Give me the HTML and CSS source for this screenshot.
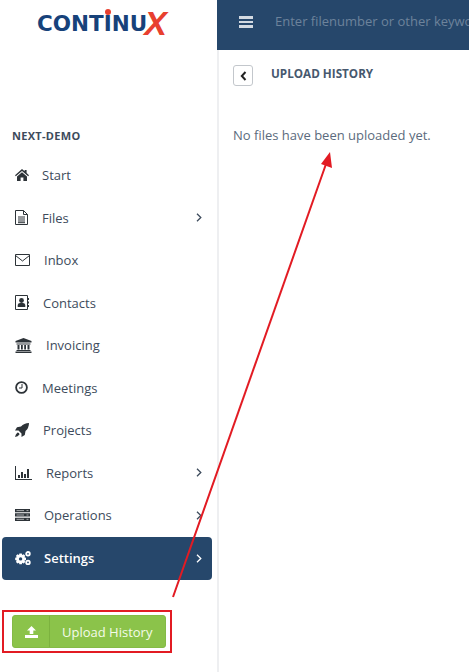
FILE: index.html
```html
<!DOCTYPE html>
<html lang="en">
<head>
    <meta charset="UTF-8">
    <meta name="viewport" content="width=device-width, initial-scale=1.0">
    <title>Upload History</title>
    <link rel="stylesheet" href="styles.css">
</head>
<body>
    <div class="app">
        <aside class="sidebar">
            <div class="logo"><span class="logo-word">CONT<span class="logo-i">I</span>NU</span><span class="logo-x">X</span></div>
            <div class="org">NEXT-DEMO</div>
            <nav class="menu">
                <a class="item">
                    <svg class="icon" width="13" height="12" viewBox="0 0 13 12"><path d="M7 0 L9.6 2.3 V1 H11.6 V4 L14 6.2 L13.2 7.2 L7 1.9 L.8 7.2 L0 6.2 Z M2 7.4 L7 3.2 L12 7.4 V12 H8.4 V8.4 H5.6 V12 H2 Z"/></svg>
                    <span>Start</span>
                </a>
                <a class="item">
                    <svg class="icon" width="13" height="15" viewBox="0 0 13 15"><path class="line" d="M.5.5 H8.5 L12.5 4.5 V14.5 H.5 Z M8.5.5 V4.5 H12.5"/><path class="line" d="M3 7 H10 M3 9 H10 M3 11 H10 M3 12.7 H10"/></svg>
                    <span>Files</span>
                    <svg class="chev" width="6" height="9" viewBox="0 0 6 9"><path d="M1 .8 L4.8 4.5 L1 8.2"/></svg>
                </a>
                <a class="item">
                    <svg class="icon" width="15" height="12" viewBox="0 0 15 12"><path class="line" d="M.5.5 H14.5 V11.5 H.5 Z M.5 1.5 L7.5 7 L14.5 1.5"/></svg>
                    <span>Inbox</span>
                </a>
                <a class="item">
                    <svg class="icon" width="14" height="15" viewBox="0 0 14 15"><path class="line" d="M.5.5 H12.5 V14.5 H.5 Z"/><circle cx="6.5" cy="5.5" r="2.4"/><path d="M2.7 12 V10 Q3 8 5 8 H8 Q10 8 10.3 10 V12 Z M13 3 H14 V5 H13 Z M13 6.5 H14 V8.5 H13 Z M13 10 H14 V12 H13 Z"/></svg>
                    <span>Contacts</span>
                </a>
                <a class="item">
                    <svg class="icon" width="17" height="15" viewBox="0 0 17 15"><path d="M8.5 0 L16.5 3 V4.5 H.5 V3 Z M1.5 5.5 H15.5 V6.5 H1.5 Z M2.5 7 H4.5 V11.5 H2.5 Z M6 7 H7.8 V11.5 H6 Z M9.2 7 H11 V11.5 H9.2 Z M12.5 7 H14.5 V11.5 H12.5 Z M1.5 12 H15.5 V13 H1.5 Z M.5 13.5 H16.5 V15 H.5 Z"/></svg>
                    <span>Invoicing</span>
                </a>
                <a class="item">
                    <svg class="icon" width="13" height="13" viewBox="0 0 13 13"><circle class="ring" cx="6.5" cy="6.5" r="5.4"/><path class="line" d="M7 3 V7 H4"/></svg>
                    <span>Meetings</span>
                </a>
                <a class="item">
                    <svg class="icon" width="14" height="14" viewBox="0 0 14 14"><path d="M14 0 Q14 5 10.5 8 L9.8 12 L6.5 14 L6.5 10.5 L3.5 7.5 L0 7.5 L2 4.2 L6 3.5 Q9 0 14 0 Z M2.5 9.5 Q4.5 9.5 4.5 11.5 Q3 13.5 0 14 Q.5 11 2.5 9.5 Z"/></svg>
                    <span>Projects</span>
                </a>
                <a class="item">
                    <svg class="icon" width="17" height="14" viewBox="0 0 17 14"><path d="M0 0 H1 V13 H17 V14 H0 Z M3 9 H5 V12 H3 Z M6 6 H8 V12 H6 Z M9 8 H11 V12 H9 Z M12 3 H14 V12 H12 Z"/></svg>
                    <span>Reports</span>
                    <svg class="chev" width="6" height="9" viewBox="0 0 6 9"><path d="M1 .8 L4.8 4.5 L1 8.2"/></svg>
                </a>
                <a class="item">
                    <svg class="icon" width="15" height="12" viewBox="0 0 15 12"><path d="M0 0 H15 V3.3 H0 Z M0 4.3 H15 V7.6 H0 Z M0 8.7 H15 V12 H0 Z"/><path class="slot" d="M1.5 1.6 H9 M1.5 6 H9 M1.5 10.3 H9 M11.5 1.6 H13.5 M11.5 6 H13.5 M11.5 10.3 H13.5"/></svg>
                    <span>Operations</span>
                    <svg class="chev" width="6" height="9" viewBox="0 0 6 9"><path d="M1 .8 L4.8 4.5 L1 8.2"/></svg>
                </a>
                <a class="item active">
                    <svg class="icon" width="15" height="14" viewBox="0 0 15 14"><path fill-rule="evenodd" d="M4.4 2.6 H6.8 L7.2 4 L8.7 3.3 L10.2 4.8 L9.5 6.3 L11 6.8 V9 L9.5 9.5 L10.2 11 L8.7 12.5 L7.2 11.8 L6.8 13.2 H4.4 L4 11.8 L2.5 12.5 L1 11 L1.7 9.5 L.2 9 V6.8 L1.7 6.3 L1 4.8 L2.5 3.3 L4 4 Z M5.6 6.2 A1.7 1.7 0 1 0 5.6 9.6 A1.7 1.7 0 1 0 5.6 6.2 Z"/><circle class="ring" cx="13" cy="2.8" r="1.8"/><circle class="ring" cx="13" cy="11.4" r="1.8"/></svg>
                    <span>Settings</span>
                    <svg class="chev" width="6" height="9" viewBox="0 0 6 9"><path d="M1 .8 L4.8 4.5 L1 8.2"/></svg>
                </a>
            </nav>
            <div class="upload-btn">
                <span class="upload-icon">
                    <svg width="13" height="12" viewBox="0 0 13 12"><path d="M6.5 0 L11 4.5 H8.3 V8 H4.7 V4.5 H2 Z M0 9 H13 V12 H0 Z"/></svg>
                </span>
                <span class="upload-label">Upload History</span>
            </div>
        </aside>
        <main class="main">
            <header class="topbar">
                <div class="burger"><i></i><i></i><i></i></div>
                <div class="search">Enter filenumber or other keywords</div>
            </header>
            <div class="content">
                <div class="title-row">
                    <div class="back">
                        <svg width="7" height="10" viewBox="0 0 7 10"><path d="M5.5 1 L1.8 5 L5.5 9"/></svg>
                    </div>
                    <h1>UPLOAD HISTORY</h1>
                </div>
                <p class="empty">No files have been uploaded yet.</p>
            </div>
        </main>
    </div>

    <!-- annotations drawn on top of the screenshot -->
    <div class="mark-box"></div>
    <svg class="mark-arrow" width="469" height="672" viewBox="0 0 469 672">
        <path d="M173 597 L326 164" />
        <polygon points="330,152 332,168 321,164" />
    </svg>
</body>
</html>
```
FILE: styles.css
```css
body {
    margin: 0;
    width: 469px;
    height: 672px;
    overflow: hidden;
    position: relative;
    background: #fff;
    font-family: "Open Sans", sans-serif;
    font-size: 13px;
    color: #3d4b5c;
}

.app {
    display: flex;
    height: 672px;
}

.sidebar {
    width: 217px;
    flex: none;
    display: flex;
    flex-direction: column;
}

.logo {
    height: 50px;
    padding: 0 0 5px 37px;
    display: flex;
    align-items: center;
    box-sizing: border-box;
}

.logo-word {
    font-family: "DejaVu Sans", sans-serif;
    font-weight: 700;
    font-size: 21.5px;
    color: #17427a;
    margin-top: 1px;
}

.logo-i {
    position: relative;
}

.logo-i::before {
    content: '';
    position: absolute;
    top: -2px;
    left: 1.5px;
    width: 6px;
    height: 6px;
    border-radius: 50%;
    background: #e8402f;
}

.logo-x {
    font-family: "Liberation Sans", sans-serif;
    font-weight: 700;
    font-style: italic;
    font-size: 34px;
    line-height: 30px;
    color: #e8402f;
    margin-left: -3px;
}

.org {
    margin: 78px 0 0 12px;
    font-size: 11px;
    line-height: 16px;
    font-weight: 700;
    letter-spacing: 0.3px;
    color: #3d4b5c;
}

.menu {
    margin-top: 10px;
    padding: 0 5px 0 2px;
    display: flex;
    flex-direction: column;
}

.item {
    height: 42.5px;
    padding: 0 13px;
    display: flex;
    align-items: center;
    gap: 14px;
    border-radius: 4px;
}

.item span {
    flex: 1;
}

.icon {
    flex: none;
    fill: #2d3338;
    overflow: visible;
}

.line {
    fill: none;
    stroke: #2d3338;
    stroke-width: 1;
}

.ring {
    fill: none;
    stroke: #2d3338;
    stroke-width: 1.8;
}

.slot {
    fill: none;
    stroke: #fff;
    stroke-width: 1;
    opacity: 0.6;
}

.chev {
    flex: none;
    fill: none;
    stroke: #3d4b5c;
    stroke-width: 1.3;
    margin-right: -2.5px;
}

.item.active {
    height: 43px;
    background: #26476b;
    color: #fff;
    font-weight: 600;
}

.item.active .icon {
    fill: #fff;
}

.item.active .ring {
    stroke: #fff;
}

.item.active .chev {
    stroke: #fff;
}

.upload-btn {
    margin: 35.5px 0 0 12px;
    width: 154px;
    height: 33px;
    display: flex;
    border-radius: 3px;
    background: #8bc34a;
    color: #f4fbe9;
    border: 1px solid #84ba46;
    box-sizing: border-box;
}

.upload-icon {
    width: 36px;
    flex: none;
    border-right: 1px solid #7cb23f;
    display: flex;
    align-items: center;
    justify-content: center;
}

.upload-icon svg {
    fill: #fff;
}

.upload-label {
    flex: 1;
    display: flex;
    align-items: center;
    padding-left: 12px;
}

.main {
    flex: 1;
    min-width: 0;
    display: flex;
    flex-direction: column;
}

.topbar {
    height: 50px;
    flex: none;
    background: #26476b;
    display: flex;
    align-items: center;
    padding-left: 22px;
    overflow: hidden;
}

.burger {
    width: 14px;
    flex: none;
    display: flex;
    flex-direction: column;
    gap: 2px;
    margin-top: -6px;
}

.burger i {
    display: block;
    height: 2.5px;
    background: #d3dae2;
}

.search {
    margin-left: 22px;
    margin-top: -8px;
    white-space: nowrap;
    color: #6d839b;
}

.content {
    flex: 1;
    border-left: 2px solid #eeeff1;
}

.title-row {
    display: flex;
    align-items: flex-start;
    padding: 15px 0 0 14px;
}

.back {
    width: 20px;
    height: 21px;
    flex: none;
    box-sizing: border-box;
    border: 1px solid #c3c7cc;
    border-radius: 3px;
    display: flex;
    align-items: center;
    justify-content: center;
}

.back svg {
    fill: none;
    stroke: #222;
    stroke-width: 2;
}

h1 {
    margin: 0 0 0 18px;
    font-size: 11.7px;
    line-height: 16px;
    font-weight: 700;
    color: #46586e;
}

.empty {
    margin: 40px 0 0 14px;
    line-height: 18px;
    color: #5b6b7d;
}

.mark-box {
    position: absolute;
    left: 2px;
    top: 610px;
    width: 170px;
    height: 43px;
    box-sizing: border-box;
    border: 2px solid #e21b23;
}

.mark-arrow {
    position: absolute;
    left: 0;
    top: 0;
    pointer-events: none;
}

.mark-arrow path {
    stroke: #e21b23;
    stroke-width: 2;
    fill: none;
}

.mark-arrow polygon {
    fill: #e21b23;
}
```
